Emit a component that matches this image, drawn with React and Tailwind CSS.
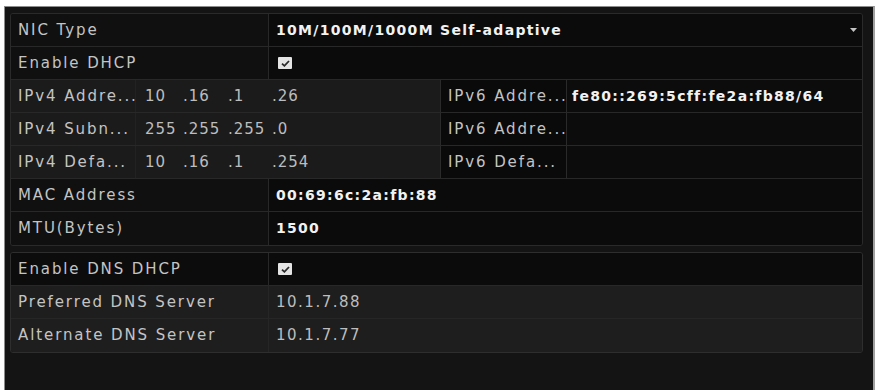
import React from "react";

const font = { fontFamily: '"DejaVu Sans", "Liberation Sans", sans-serif' };

const labelCls = "text-[15px] tracking-[1.9px] text-[#c4c4c4] whitespace-nowrap";
const valueCls = "text-[14px] font-bold tracking-[1.3px] text-[#f2f2f2] whitespace-nowrap";
const grayValCls = "text-[15px] tracking-[1.5px] text-[#bdbdbd] whitespace-nowrap";
const octetCls = "text-[15px] tracking-[1px] text-[#bdbdbd] whitespace-nowrap";

function Check() {
    return (
        <span className="flex items-center justify-center w-[14px] h-[12px] bg-[#e4e4e4] rounded-[1px]">
            <svg width="9" height="7" viewBox="0 0 9 7">
                <path d="M1 3.6 L3.4 5.8 L8 1" fill="none" stroke="#2a2a2a" strokeWidth="1.8" />
            </svg>
        </span>
    );
}

function Row({ label, children, last, labelBg = "bg-[#101010]", valueBg = "bg-[#0b0b0b]", line = "border-[#282828]" }) {
    return (
        <div className={`flex h-[33px] ${last ? "" : "border-b " + line}`}>
            <div className={`w-[258px] flex items-center pl-[7px] border-r ${line} ${labelBg}`}>
                <span className={labelCls}>{label}</span>
            </div>
            <div className={`flex-1 flex items-center pl-[7px] ${valueBg}`}>{children}</div>
        </div>
    );
}

function IpRow({ v4label, octets, v6label, v6value }) {
    // each octet sits in its own little field, like the DVR's ip editor
    const widths = ["w-[44px] pl-[9px]", "w-[44px] pl-[3px]", "w-[44px] pl-[4px]", "w-[48px] pl-[4px]"];
    return (
        <div className="flex h-[33px] border-b border-[#282828]">
            <div className="w-[429px] flex bg-[#1b1b1b]">
                <div className="w-[125px] flex items-center pl-[7px] border-r border-[#222]">
                    <span className={labelCls}>{v4label}</span>
                </div>
                {octets.map((o, i) => (
                    <div key={i} className={`flex items-center ${widths[i]}`}>
                        <span className={octetCls}>{o}</span>
                    </div>
                ))}
            </div>
            <div className="w-[127px] flex items-center pl-[7px] bg-[#0a0a0a] border-x border-[#2a2a2a]">
                <span className={labelCls}>{v6label}</span>
            </div>
            <div className="flex-1 flex items-center pl-[5px] bg-[#0c0c0c]">
                {v6value && <span className={valueCls}>{v6value}</span>}
            </div>
        </div>
    );
}

export default function App() {
    return (
        <div className="w-[879px] h-[390px] bg-white pt-[6px] pl-[4px] pr-[4px] overflow-hidden" style={font}>
            <div className="h-full bg-[#141414] border-t border-l border-[#8c8c8c] border-r-2 border-r-[#a0a0a0] pt-[6px] pl-[5px] pr-[10px]">
                {/* network group */}
                <div className="border border-[#2a2a2a] rounded-[3px] overflow-hidden">
                    <Row label="NIC Type">
                        <div className="flex-1 flex items-center justify-between pr-[5px]">
                            <span className={valueCls}>10M/100M/1000M Self-adaptive</span>
                            <svg width="7" height="4" viewBox="0 0 7 4">
                                <polygon points="0,0 7,0 3.5,4" fill="#c4c4c4" />
                            </svg>
                        </div>
                    </Row>
                    <Row label="Enable DHCP">
                        <span className="pl-[2px]"><Check /></span>
                    </Row>
                    <IpRow v4label="IPv4 Addre..." octets={["10", ".16", ".1", ".26"]} v6label="IPv6 Addre..." v6value="fe80::269:5cff:fe2a:fb88/64" />
                    <IpRow v4label="IPv4 Subn..." octets={["255", ".255", ".255", ".0"]} v6label="IPv6 Addre..." />
                    <IpRow v4label="IPv4 Defa..." octets={["10", ".16", ".1", ".254"]} v6label="IPv6 Defa..." />
                    <Row label="MAC Address">
                        <span className={valueCls}>00:69:6c:2a:fb:88</span>
                    </Row>
                    <Row label="MTU(Bytes)" last>
                        <span className={valueCls}>1500</span>
                    </Row>
                </div>

                {/* dns group */}
                <div className="mt-[6px] border border-[#2e2e2e] rounded-[3px] overflow-hidden">
                    <Row label="Enable DNS DHCP" labelBg="bg-[#0c0c0c]" valueBg="bg-[#0b0b0b]">
                        <span className="pl-[2px]"><Check /></span>
                    </Row>
                    <Row label="Preferred DNS Server" labelBg="bg-[#1e1e1e]" valueBg="bg-[#1e1e1e]" line="border-[#262626]">
                        <span className={grayValCls}>10.1.7.88</span>
                    </Row>
                    <Row label="Alternate DNS Server" labelBg="bg-[#1e1e1e]" valueBg="bg-[#1e1e1e]" line="border-[#262626]" last>
                        <span className={grayValCls}>10.1.7.77</span>
                    </Row>
                </div>
            </div>
        </div>
    );
}
